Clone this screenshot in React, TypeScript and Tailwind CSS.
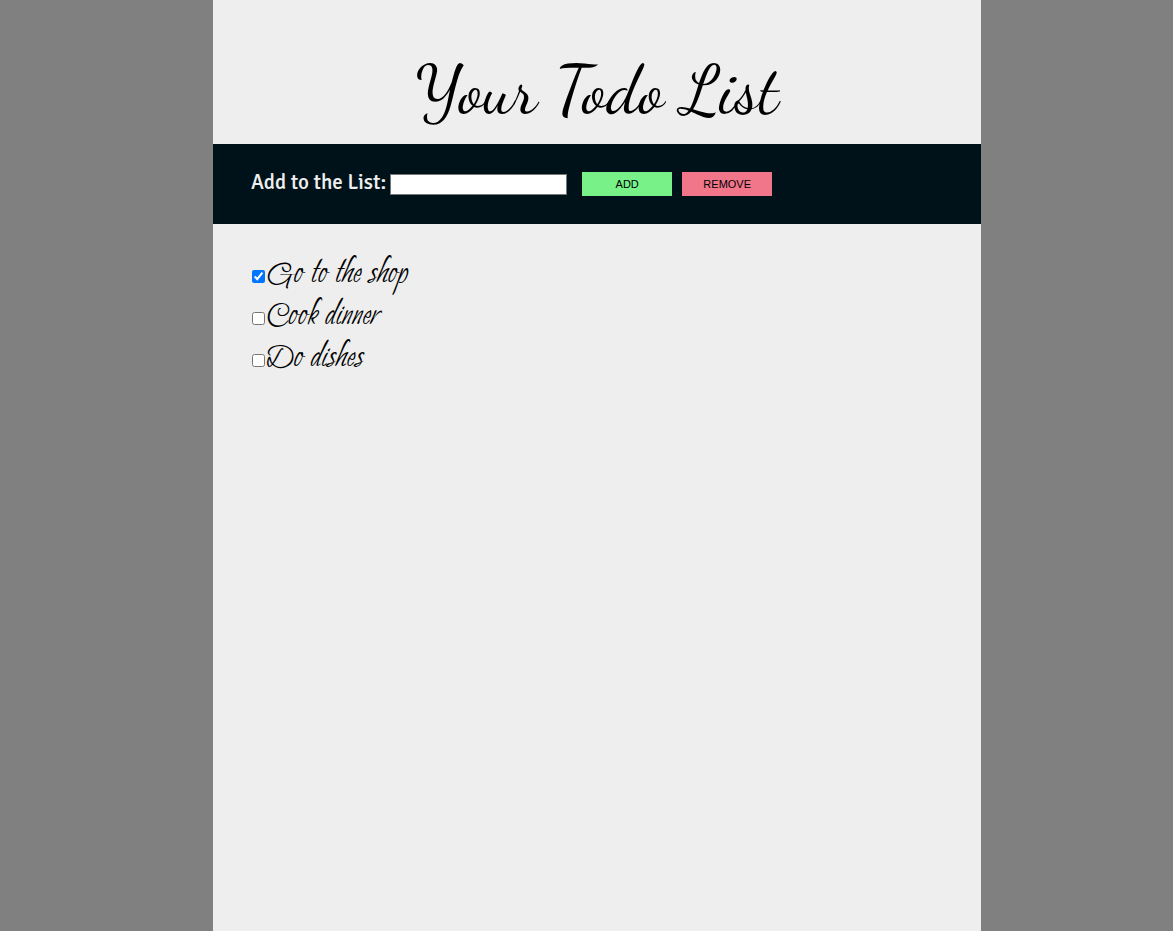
import { useState } from "react";
import type { FormEvent } from "react";

type Task = { id: number; text: string; done: boolean };

const initialTasks: Task[] = [
  { id: 1, text: "Go to the shop", done: true },
  { id: 2, text: "Cook dinner", done: false },
  { id: 3, text: "Do dishes", done: false },
];

export default function App() {
  const [tasks, setTasks] = useState(initialTasks);
  const [draft, setDraft] = useState("");

  const addTask = (event: FormEvent) => {
    event.preventDefault();
    const text = draft.trim();
    if (!text) return;
    setTasks([...tasks, { id: Date.now(), text, done: false }]);
    setDraft("");
  };

  const toggle = (id: number) =>
    setTasks(tasks.map((t) => (t.id === id ? { ...t, done: !t.done } : t)));

  return (
    <div className="min-h-screen bg-[#808080] pl-[21px] text-black">
      <main className="mx-auto min-h-screen max-w-3xl bg-[#eeeeee]">
        <h1 className="px-4 pt-[50px] pb-3.5 text-center font-['Dancing_Script','Liberation_Serif',cursive] text-[68px] leading-[80px] font-normal">
          Your Todo List
        </h1>

        <form
          onSubmit={addTask}
          className="flex min-h-20 flex-wrap items-center gap-y-2 bg-[#001219] px-[38px]"
        >
          <label
            htmlFor="new-task"
            className="mr-1 min-w-[135px] pb-1 font-['Signika_Negative','Signika','Open_Sans',sans-serif] text-[21px] leading-6 font-medium whitespace-nowrap text-[#eeeeee]"
          >
            Add to the List:
          </label>
          <input
            id="new-task"
            type="text"
            value={draft}
            onChange={(e) => setDraft(e.target.value)}
            className="mr-[15px] h-[21px] w-[177px] border border-[#767676] bg-white px-0.5 font-['Liberation_Sans',sans-serif] text-[13px]"
          />
          <div className="flex gap-2.5 font-['Liberation_Sans',sans-serif] text-[11px]">
            <button type="submit" className="h-6 w-[90px] bg-[#78f189]">
              ADD
            </button>
            <button
              type="button"
              onClick={() => setTasks(tasks.filter((t) => !t.done))}
              className="h-6 w-[90px] bg-[#f1768a]"
            >
              REMOVE
            </button>
          </div>
        </form>

        <ul className="px-[39px] pt-[31px]">
          {tasks.map((task) => (
            <li key={task.id} className="flex h-[42px] items-center">
              <input
                id={`task-${task.id}`}
                type="checkbox"
                checked={task.done}
                onChange={() => toggle(task.id)}
                className="mr-0.5 size-[13px]"
              />
              <label
                htmlFor={`task-${task.id}`}
                className="pb-2 font-['Petemoss','Bilbo_Swash_Caps','Liberation_Serif',cursive] text-[42px] leading-8"
              >
                {task.text}
              </label>
            </li>
          ))}
        </ul>
      </main>
    </div>
  );
}
